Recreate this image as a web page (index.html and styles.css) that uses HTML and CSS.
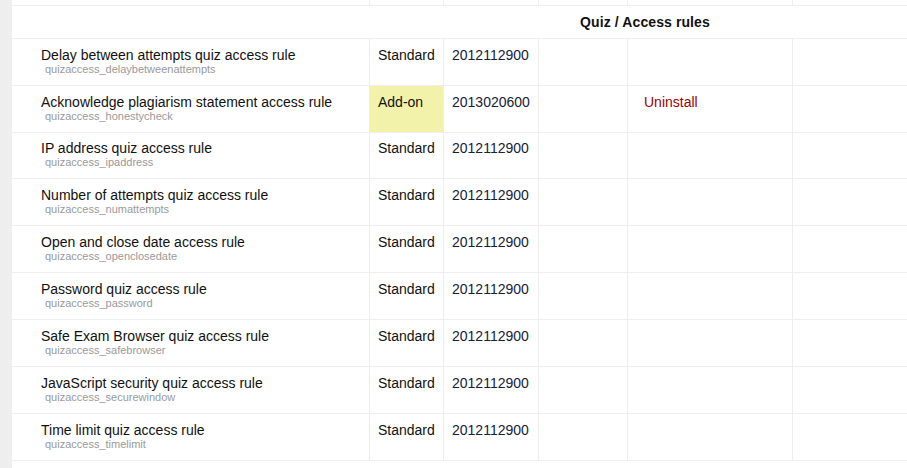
FILE: index.html
```html
<!DOCTYPE html>
<html>
<head>
<meta charset="utf-8">
<link rel="stylesheet" href="styles.css">
</head>
<body>
<div class="page">
<table class="plugins">
  <colgroup>
    <col class="c-name"><col class="c-source"><col class="c-version"><col class="c-avail"><col class="c-uninstall"><col class="c-notes">
  </colgroup>
  <tr class="spacer"><td></td><td></td><td></td><td></td><td></td><td></td></tr>
  <tr class="type"><th colspan="6">Quiz / Access rules</th></tr>
  <tr><td class="name">Delay between attempts quiz access rule<span class="comp">quizaccess_delaybetweenattempts</span></td><td class="source">Standard</td><td class="version">2012112900</td><td></td><td></td><td></td></tr>
  <tr><td class="name">Acknowledge plagiarism statement access rule<span class="comp">quizaccess_honestycheck</span></td><td class="source addon">Add-on</td><td class="version">2013020600</td><td></td><td class="uninstall"><a href="#">Uninstall</a></td><td></td></tr>
  <tr class="tight"><td class="name">IP address quiz access rule<span class="comp">quizaccess_ipaddress</span></td><td class="source">Standard</td><td class="version">2012112900</td><td></td><td></td><td></td></tr>
  <tr><td class="name">Number of attempts quiz access rule<span class="comp">quizaccess_numattempts</span></td><td class="source">Standard</td><td class="version">2012112900</td><td></td><td></td><td></td></tr>
  <tr><td class="name">Open and close date access rule<span class="comp">quizaccess_openclosedate</span></td><td class="source">Standard</td><td class="version">2012112900</td><td></td><td></td><td></td></tr>
  <tr><td class="name">Password quiz access rule<span class="comp">quizaccess_password</span></td><td class="source">Standard</td><td class="version">2012112900</td><td></td><td></td><td></td></tr>
  <tr><td class="name">Safe Exam Browser quiz access rule<span class="comp">quizaccess_safebrowser</span></td><td class="source">Standard</td><td class="version">2012112900</td><td></td><td></td><td></td></tr>
  <tr><td class="name">JavaScript security quiz access rule<span class="comp">quizaccess_securewindow</span></td><td class="source">Standard</td><td class="version">2012112900</td><td></td><td></td><td></td></tr>
  <tr><td class="name">Time limit quiz access rule<span class="comp">quizaccess_timelimit</span></td><td class="source">Standard</td><td class="version">2012112900</td><td></td><td></td><td></td></tr>
</table>
</div>
</body>
</html>
```

FILE: styles.css
```css
html, body {
  margin: 0;
  padding: 0;
  background: #eeeeee;
  overflow: hidden;
}
.page {
  margin-left: 12px;
  background: #ffffff;
  width: 1266px;
  min-height: 468px;
}
.plugins {
  border-collapse: separate;
  border-spacing: 0;
  table-layout: fixed;
  width: 1266px;
  font-family: "Liberation Sans", Arial, sans-serif;
  font-size: 14px;
  color: #111111;
}
.c-name { width: 358px; }
.c-source { width: 74px; }
.c-version { width: 95px; }
.c-avail { width: 89px; }
.c-uninstall { width: 165px; }
.c-notes { width: 485px; }

.plugins td, .plugins th {
  border-bottom: 1px solid #eeeeee;
  box-sizing: border-box;
}
.plugins td {
  border-right: 1px solid #eeeeee;
  padding: 8px 8px 9px 8px;
  line-height: 16px;
  vertical-align: top;
}
.plugins td:last-child { border-right: none; }
.plugins .tight td { padding-top: 7px; }

.spacer td {
  height: 6px;
  padding: 0;
  line-height: 0;
  font-size: 0;
}
.type th {
  padding: 8px 0;
  line-height: 16px;
  font-weight: bold;
  font-size: 14px;
  letter-spacing: 0.1px;
  text-align: center;
  color: #111111;
}
.plugins td.name {
  padding-left: 29px;
}
.comp {
  display: block;
  margin-left: 4px;
  font-size: 11px;
  line-height: 13px;
  color: #9a9a9a;
}
.addon {
  background: #f3f2aa;
}
.version {
  color: #14213a;
}
.plugins td.uninstall {
  padding-left: 16px;
}
.uninstall a {
  color: #a00000;
  text-decoration: none;
}
```
